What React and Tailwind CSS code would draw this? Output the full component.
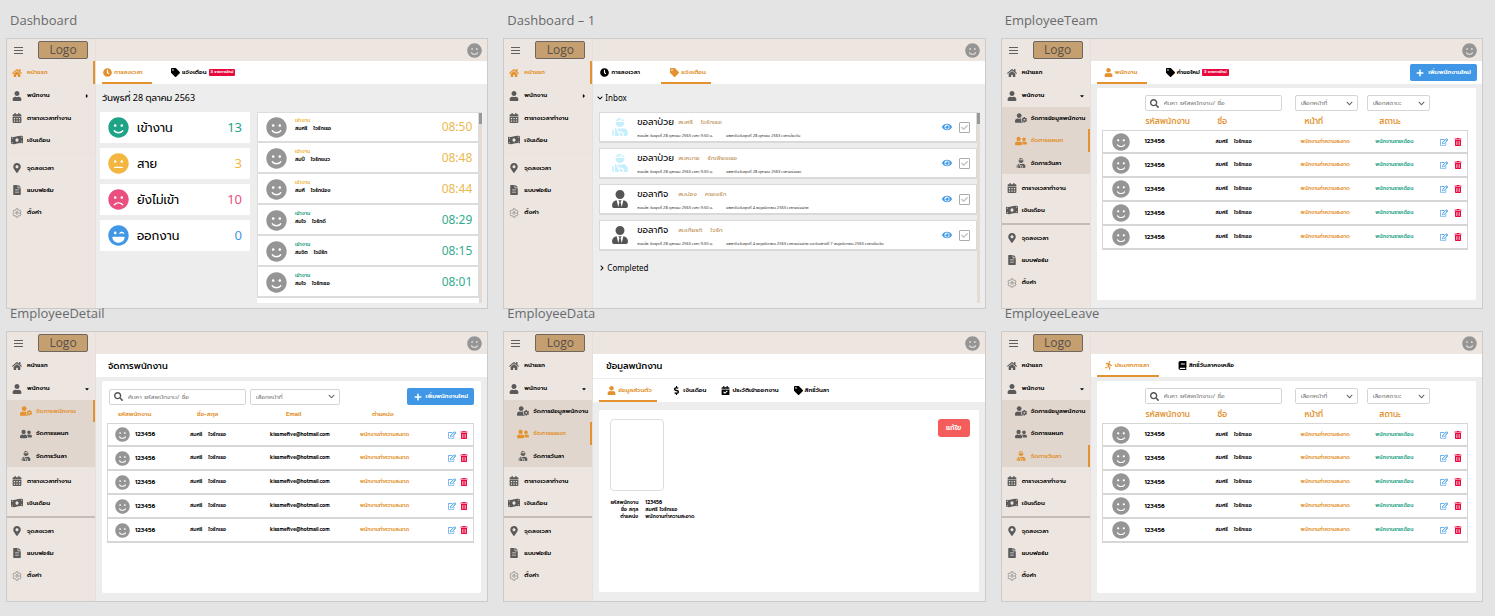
import React from "react";
import {
  FaBook, FaCalendarAlt, FaCalendarCheck, FaCaretDown, FaCaretRight, FaChevronDown, FaChevronRight,
  FaClock, FaDollarSign, FaEye, FaFileAlt, FaFrown, FaHome, FaLaughWink, FaMapMarkerAlt, FaMeh,
  FaMoneyBillWave, FaPlus, FaRegEdit, FaRunning, FaSearch, FaSmile, FaTag, FaTrashAlt, FaUser,
  FaUserCog, FaUserFriends, FaUserInjured, FaUserTie, FaCheck,
} from "react-icons/fa";
import { IoSettingsOutline } from "react-icons/io5";

const BASE_FONT = "font-['Prompt','Kanit','Noto_Sans_Thai','Noto_Sans','Open_Sans',sans-serif]";
const DIGIT_FONT = "font-['Noto_Sans','Prompt','Kanit',sans-serif]";

function NavItem({ icon: Icon, label, active, tall, wide, caret: Caret, sub, light }) {
  return (
    <li>
      <a
        href="#"
        className={`flex items-center border-r-2 text-[6px] font-semibold whitespace-nowrap ${tall ? "h-[23px]" : "h-[22px]"} ${
          sub ? "pl-[13px]" : "pl-[4px]"
        } ${active ? "border-[#e3922f] text-[#e3922f]" : "border-transparent text-black"}`}
      >
        <span className={`mr-[4px] flex w-[12px] shrink-0 justify-center ${active ? "" : light ? "text-[#777]" : "text-[#5a5a5a]"}`}>
          <Icon className={wide ? "size-[12px] shrink-0" : "size-[10px] shrink-0"} />
        </span>
        {label}
        {Caret && <Caret className="mr-[3px] ml-auto size-[6px]" />}
      </a>
    </li>
  );
}

function Sidebar({ active, open, firstSub = "จัดการข้อมูลพนักงาน" }) {
  return (
    <nav className="w-[89px] shrink-0 border-r border-[#e6e0dc] bg-[#ede5df]">
      <ul>
        <NavItem icon={FaHome} label="หน้าแรก" tall active={active === "home"} />
        <NavItem icon={FaUser} label="พนักงาน" tall caret={open ? FaCaretDown : FaCaretRight} />
      </ul>
      {open && (
        <ul className="mb-[3px] bg-[#e0d6ce]">
          <NavItem sub wide icon={FaUserCog} label={firstSub} active={active === "data"} />
          <NavItem sub wide tall icon={FaUserFriends} label="จัดการแผนก" active={active === "team"} />
          <NavItem sub icon={FaUserInjured} label="จัดการวันลา" active={active === "leave"} />
        </ul>
      )}
      <ul>
        <NavItem icon={FaCalendarAlt} label="ตารางเวลาทำงาน" />
        <NavItem wide icon={FaMoneyBillWave} label="เงินเดือน" />
      </ul>
      <hr className={`my-[2px] border-t-2 ${open ? "border-[#c4bcb7]" : "border-[#ebe3dd]"}`} />
      <ul>
        <NavItem icon={FaMapMarkerAlt} label="จุดลงเวลา" />
        <NavItem icon={FaFileAlt} label="แบบฟอร์ม" />
        <NavItem tall light icon={IoSettingsOutline} label="ตั้งค่า" />
      </ul>
    </nav>
  );
}

function Artboard({ title, sidebar, children }) {
  return (
    <section className="flex min-w-0 flex-col">
      <h2 className="mb-[14px] pl-[4px] font-['Open_Sans',sans-serif] text-[13px] leading-[8px] whitespace-nowrap text-[#6a6a6a]">{title}</h2>
      <div className="flex flex-1 flex-col border border-[#cbcbcb] bg-[#ededed]">
        <header className="flex h-[22px] items-center bg-[#ede5df]">
          <div className="flex h-full w-[89px] items-center border-r border-[#e6e0dc] pl-[7px]">
            <button type="button" aria-label="เมนู" className="flex w-[9px] flex-col gap-[2px]">
              <span className="h-px w-full bg-[#5f5f5f]" />
              <span className="h-px w-full bg-[#5f5f5f]" />
              <span className="h-px w-full bg-[#5f5f5f]" />
            </button>
            <span className="ml-[15px] flex h-[18px] w-[50px] items-center justify-center rounded-[2px] border border-[#6d675f] bg-[#c59f70] font-['Open_Sans',sans-serif] text-[12px] leading-none text-[#575049]">
              Logo
            </span>
          </div>
          <FaSmile className="mr-[5px] ml-auto size-[15px] text-[#959595]" />
        </header>
        <div className="flex min-h-[247px] flex-1">
          {sidebar}
          <main className="flex min-w-0 flex-1 flex-col">{children}</main>
        </div>
      </div>
    </section>
  );
}

function Tab({ icon: Icon, label, active, badge, className = "" }) {
  return (
    <a
      href="#"
      className={`flex h-full items-center gap-[2px] border-b-2 pt-[2px] text-[6px] font-semibold whitespace-nowrap ${
        active ? "border-[#e3922f] text-[#e3922f]" : "border-transparent text-black"
      } ${className}`}
    >
      <Icon className="size-[9px] shrink-0" />
      {label}
      {badge && <span className="rounded-[1px] bg-[#e8093f] px-[2px] text-[4px] leading-[7px] text-white">{badge}</span>}
    </a>
  );
}

function Tabs({ children }) {
  return <div className="flex h-[23px] shrink-0 items-stretch bg-white pl-[6px]">{children}</div>;
}

const stats = [
  { icon: FaSmile, label: "เข้างาน", value: 13, color: "text-[#1fa387]" },
  { icon: FaMeh, label: "สาย", value: 3, color: "text-[#f3b63f]" },
  { icon: FaFrown, label: "ยังไม่เข้า", value: 10, color: "text-[#ea4f7f]" },
  { icon: FaLaughWink, label: "ออกงาน", value: 0, color: "text-[#3f97e6]" },
];

const checkins = [
  ["สมศรี", "ใจรักเธอ", "08:50", true],
  ["สมปี", "ใจรักแนว", "08:48", true],
  ["สมศี", "ใจรักน้อง", "08:44", true],
  ["สมใจ", "ใจรักดี", "08:29", false],
  ["สมจิต", "ใจมีรัก", "08:15", false],
  ["สมใจ", "ใจรักเธอ", "08:01", false],
];

function ScrollTrack() {
  return (
    <div className="w-[3px] shrink-0 bg-[#e4dbd5] pt-px">
      <div className="h-[11px] bg-[#999]" />
    </div>
  );
}

function Dashboard() {
  return (
    <>
      <Tabs>
        <Tab icon={FaClock} label="การลงเวลา" active className="w-[50px] pl-px" />
        <Tab icon={FaTag} label="แจ้งเตือน" badge="3 รายการใหม่" className="ml-[19px]" />
      </Tabs>
      <p className={`pl-[6px] text-[9px] leading-[28px] ${DIGIT_FONT}`}>วันพุธที่ 28 ตุลาคม 2563</p>
      <div className="flex pr-[5px] pl-[4px]">
        <ul className="flex w-[150px] shrink-0 flex-col gap-[5px]">
          {stats.map((s) => (
            <li key={s.label} className="flex h-[31px] items-center rounded-[1px] bg-white pr-[8px] pl-[8px]">
              <s.icon className={`size-[21px] ${s.color}`} />
              <span className="ml-[8px] text-[12px] leading-none">{s.label}</span>
              <span className={`ml-auto text-[13px] leading-none ${DIGIT_FONT} ${s.color}`}>{s.value}</span>
            </li>
          ))}
        </ul>
        <ul className="ml-[7px] h-[191px] flex-1 overflow-hidden">
          {checkins.map(([first, last, time, late], i) => (
            <li key={i} className="flex h-[31px] items-center border border-b-2 border-[#dcdcdc] border-t-transparent bg-white pr-[6px] pl-[8px] first:border-t-[#dcdcdc]">
              <FaSmile className="size-[21px] text-[#959595]" />
              <div className="mb-[5px] ml-[8px] text-[5px] leading-[8px] font-semibold">
                <p className={late ? "text-[#f0b848]" : "text-[#1fa387]"}>เข้างาน</p>
                <p className="flex gap-[6px]"><span>{first}</span><span>{last}</span></p>
              </div>
              <time className={`ml-auto text-[12px] leading-none ${DIGIT_FONT} ${late ? "text-[#ecb950]" : "text-[#35ab90]"}`}>{time}</time>
            </li>
          ))}
          <li className="h-[31px] bg-white" />
        </ul>
        <ScrollTrack />
      </div>
    </>
  );
}

const requests = [
  ["ขอลาป่วย", "สมศรี", "ใจรักเธอ", "ขอลาในวันพุธที่ 28 ตุลาคม 2563 เวลาเต็มวัน", true],
  ["ขอลาป่วย", "สมหมาย", "รักเพียงเธอ", "ขอลาในวันพุธที่ 28 ตุลาคม 2563 เวลาครึ่งเช้า", true],
  ["ขอลากิจ", "สมปอง", "ครองรัก", "ขอลาในวันพุธที่ 4 พฤศจิกายน 2563 เวลาครึ่งบ่าย", false],
  ["ขอลากิจ", "สมเกียรติ", "ใจรัก", "ขอลาในวันพุธที่ 4 พฤศจิกายน 2563 เวลาครึ่งบ่าย ถึงวันเสาร์ที่ 7 พฤศจิกายน 2563 เวลาเต็มวัน", false],
];

function Inbox() {
  return (
    <>
      <Tabs>
        <Tab icon={FaClock} label="การลงเวลา" className="w-[50px] pl-px" />
        <Tab icon={FaTag} label="แจ้งเตือน" active className="ml-[12px] w-[50px] pl-[9px]" />
      </Tabs>
      <button type="button" className="flex h-[28px] items-center gap-[2px] pl-[4px] font-['Noto_Sans',sans-serif] text-[8px]">
        <FaChevronDown className="size-[6px]" />
        Inbox
      </button>
      <div className="flex h-[191px] pr-[5px] pl-[6px]">
        <div className="min-w-0 flex-1">
          <ul className="flex flex-col gap-[5px]">
            {requests.map(([kind, first, last, detail, sick], i) => (
              <li key={i} className="flex h-[31px] items-center border border-b-2 border-[#d9d9d9] bg-white pr-[6px] pl-[11px]">
                {sick ? <FaUserInjured className="size-[18px] shrink-0 text-[#c5effc]" /> : <FaUserTie className="size-[18px] shrink-0 text-[#555]" />}
                <div className="ml-[8px] min-w-0 flex-1 whitespace-nowrap">
                  <p className="flex items-center text-[9px] leading-[17px]">
                    <span className="w-[41px] shrink-0">{kind}</span>
                    <span className="flex gap-[8px] text-[6px] text-[#b98a4a]"><span>{first}</span><span>{last}</span></span>
                  </p>
                  <p className={`flex text-[4px] leading-[9px] text-[#333] ${DIGIT_FONT}`}>
                    <span className="w-[89px] shrink-0">ลงเมื่อ วันพุธที่ 28 ตุลาคม 2563 เวลา 9:30 น.</span>
                    <span>{detail}</span>
                  </p>
                </div>
                <button type="button" aria-label="ดูรายละเอียด" className="mr-[7px] text-[#3f97e6]"><FaEye className="size-[10px]" /></button>
                <label className="relative flex size-[11px] items-center justify-center rounded-[1px] border border-[#ababab]">
                  <input type="checkbox" aria-label="อนุมัติ" className="absolute inset-0 appearance-none" />
                  <FaCheck className="size-[7px] text-[#c4c4c4]" />
                </label>
              </li>
            ))}
          </ul>
          <button type="button" className="flex h-[34px] items-center gap-[2px] font-['Noto_Sans',sans-serif] text-[8px]">
            <FaChevronRight className="size-[6px]" />
            Completed
          </button>
        </div>
        <ScrollTrack />
      </div>
    </>
  );
}

function SearchBox() {
  return (
    <label className="flex h-[16px] w-[137px] items-center gap-[5px] rounded-[2px] border border-[#d5d5d5] bg-white pl-[4px]">
      <FaSearch className="size-[9px] shrink-0 text-[#555]" />
      <input type="search" aria-label="ค้นหา" placeholder="ค้นหา รหัสพนักงาน/ ชื่อ" className="w-full min-w-0 text-[6px] leading-none outline-none placeholder:text-[#777]" />
    </label>
  );
}

function Select({ label, className }) {
  return (
    <label className={`flex h-[16px] items-center rounded-[2px] border border-[#d5d5d5] bg-white pr-[4px] pl-[5px] ${className}`}>
      <select aria-label={label} className="min-w-0 flex-1 appearance-none text-[6px] leading-[14px] text-[#777] outline-none">
        <option>{label}</option>
      </select>
      <FaChevronDown className="size-[7px] text-[#666]" />
    </label>
  );
}

function AddButton() {
  return (
    <button type="button" className="flex h-[17px] w-[67px] items-center justify-center gap-[4px] rounded-[2px] bg-[#3f97e6] text-[6px] font-semibold whitespace-nowrap text-white">
      <FaPlus className="size-[8px]" />
      เพิ่มพนักงานใหม่
    </button>
  );
}

function RowActions({ tight }) {
  return (
    <div className={`flex justify-end pr-[5px] ${tight ? "gap-[4px]" : "gap-[6px]"}`}>
      <button type="button" aria-label="แก้ไข" className="text-[#3f97e6]"><FaRegEdit className="size-[8px]" /></button>
      <button type="button" aria-label="ลบ" className="text-[#e8093f]"><FaTrashAlt className="size-[8px]" /></button>
    </div>
  );
}

const CELL = "h-[24px] border-b-2 border-[#d6d6d6] p-0 group-first:border-t";
const people = [1, 2, 3, 4, 5];

function Name() {
  return <span className="flex gap-[6px]"><span>สมศรี</span><span>ใจรักเธอ</span></span>;
}

function TeamTable() {
  return (
    <div className="mx-[6px] mt-[4px] mb-[8px] flex-1 rounded-[2px] bg-white pt-[7px] pr-[8px] pl-[5px]">
      <div className="flex pl-[43px]">
        <SearchBox />
        <Select label="เลือกหน้าที่" className="ml-[13px] w-[63px]" />
        <Select label="เลือกสถานะ" className="ml-[9px] w-[63px]" />
      </div>
      <table className="w-full table-fixed border-separate border-spacing-0 text-left text-[6px] font-semibold whitespace-nowrap">
        <thead>
          <tr className="h-[19px] text-[8px] leading-none text-[#e3922f]">
            <th className="w-[11.7%] p-0" aria-label="รูป" />
            <th className="w-[19.4%] p-0 pl-px font-medium">รหัสพนักงาน</th>
            <th className="w-[23.2%] p-0 pl-[2px] font-medium">ชื่อ</th>
            <th className="w-[20.4%] p-0 pl-[4px] font-medium">หน้าที่</th>
            <th className="w-[15%] p-0 pl-[4px] font-medium">สถานะ</th>
            <th className="p-0" aria-label="จัดการ" />
          </tr>
        </thead>
        <tbody>
          {people.map((p) => (
            <tr key={p} className="group">
              <td className={`${CELL} border-l`}><FaSmile className="ml-[9px] size-[18px] text-[#959595]" /></td>
              <td className={CELL}>123456</td>
              <td className={CELL}><span className="text-[5px]"><Name /></span></td>
              <td className={`${CELL} text-[5px] text-[#e3922f]`}>พนักงานทำความสะอาด</td>
              <td className={`${CELL} text-[5px] text-[#1fa387]`}>พนักงานรายเดือน</td>
              <td className={`${CELL} border-r`}><RowActions /></td>
            </tr>
          ))}
        </tbody>
      </table>
    </div>
  );
}

function Team() {
  return (
    <>
      <div className="flex items-center bg-white pr-[5px]">
        <Tabs>
          <Tab icon={FaUser} label="พนักงาน" active className="w-[50px] pl-[7px]" />
          <Tab icon={FaTag} label="คำขอใหม่" badge="3 รายการใหม่" className="ml-[19px]" />
        </Tabs>
        <div className="ml-auto"><AddButton /></div>
      </div>
      <TeamTable />
    </>
  );
}

function Leave() {
  return (
    <>
      <Tabs>
        <Tab icon={FaRunning} label="ประเภทการลา" active className="w-[62px] pl-[7px]" />
        <Tab icon={FaBook} label="สิทธิ์วันลาคงเหลือ" className="ml-[19px]" />
      </Tabs>
      <TeamTable />
    </>
  );
}

function Detail() {
  return (
    <>
      <h3 className="h-[23px] bg-white pl-[12px] text-[9px] leading-[25px] font-medium">จัดการพนักงาน</h3>
      <div className="mx-[6px] mt-[4px] mb-[8px] flex-1 rounded-[2px] bg-white pt-[7px] pr-[7px] pl-[5px]">
        <div className="flex items-center pl-[2px]">
          <SearchBox />
          <Select label="เลือกหน้าที่" className="ml-[4px] w-[90px]" />
          <div className="ml-auto"><AddButton /></div>
        </div>
        <table className="w-full table-fixed border-separate border-spacing-0 text-left text-[6px] font-semibold whitespace-nowrap">
          <thead>
            <tr className="h-[18px] leading-none text-[#e3922f]">
              <th className="w-[22.6%] p-0 pl-[11px] font-semibold">รหัสพนักงาน</th>
              <th className="w-[21.8%] p-0 pl-[7px] font-semibold">ชื่อ-สกุล</th>
              <th className="w-[24.5%] p-0 pl-[16px] font-semibold">Email</th>
              <th className="w-[20%] p-0 pl-[12px] font-semibold">ตำแหน่ง</th>
              <th className="p-0" aria-label="จัดการ" />
            </tr>
          </thead>
          <tbody>
            {people.map((p) => (
              <tr key={p} className="group">
                <td className={`${CELL} border-l`}>
                  <span className="flex items-center gap-[5px] pl-[7px]"><FaSmile className="size-[15px] text-[#959595]" />123456</span>
                </td>
                <td className={CELL}><span className="text-[5px]"><Name /></span></td>
                <td className={`${CELL} text-[5px]`}>kissmefive@hotmail.com</td>
                <td className={`${CELL} text-[5px] text-[#e3922f]`}>พนักงานทำความสะอาด</td>
                <td className={`${CELL} border-r`}><RowActions tight /></td>
              </tr>
            ))}
          </tbody>
        </table>
      </div>
    </>
  );
}

function Data() {
  return (
    <>
      <h3 className="mb-px h-[24px] bg-white pl-[13px] text-[9px] leading-[25px] font-medium">ข้อมูลพนักงาน</h3>
      <Tabs>
        <Tab icon={FaUser} label="ข้อมูลส่วนตัว" active className="w-[58px] pl-[8px]" />
        <Tab icon={FaDollarSign} label="เงินเดือน" className="ml-[15px]" />
        <Tab icon={FaCalendarCheck} label="ประวัติเข้าออกงาน" className="ml-[15px]" />
        <Tab icon={FaTag} label="สิทธิ์วันลา" className="ml-[15px]" />
      </Tabs>
      <div className="mx-[6px] mt-[8px] mb-[9px] flex flex-1 items-start justify-between rounded-[2px] bg-white pt-[9px] pr-[9px] pl-[3px]">
        <div>
          <div className="ml-[8px] h-[72px] w-[54px] rounded-[4px] border border-[#dedede]" />
          <dl className="mt-[8px] grid grid-cols-[36px_auto] gap-x-[7px] text-[5px] leading-[7px] font-semibold whitespace-nowrap">
            <dt className="text-right">รหัสพนักงาน</dt><dd>123456</dd>
            <dt className="text-right">ชื่อ สกุล</dt><dd>สมศรี ใจรักเธอ</dd>
            <dt className="text-right">ตำแหน่ง</dt><dd>พนักงานทำความสะอาด</dd>
          </dl>
        </div>
        <button type="button" className="h-[18px] w-[32px] rounded-[3px] bg-[#f55c5c] text-[7px] font-semibold text-white">แก้ไข</button>
      </div>
    </>
  );
}

export default function App() {
  return (
    <div className={`grid min-h-screen grid-cols-3 content-start gap-x-[15px] bg-[#e4e4e4] pt-[16px] pr-[12px] pb-[13px] pl-[6px] text-black ${BASE_FONT}`}>
      <Artboard title="Dashboard" sidebar={<Sidebar active="home" />}><Dashboard /></Artboard>
      <Artboard title="Dashboard – 1" sidebar={<Sidebar active="home" />}><Inbox /></Artboard>
      <Artboard title="EmployeeTeam" sidebar={<Sidebar active="team" open />}><Team /></Artboard>
      <Artboard title="EmployeeDetail" sidebar={<Sidebar active="data" open firstSub="จัดการพนักงาน" />}><Detail /></Artboard>
      <Artboard title="EmployeeData" sidebar={<Sidebar active="team" open />}><Data /></Artboard>
      <Artboard title="EmployeeLeave" sidebar={<Sidebar active="leave" open />}><Leave /></Artboard>
    </div>
  );
}
